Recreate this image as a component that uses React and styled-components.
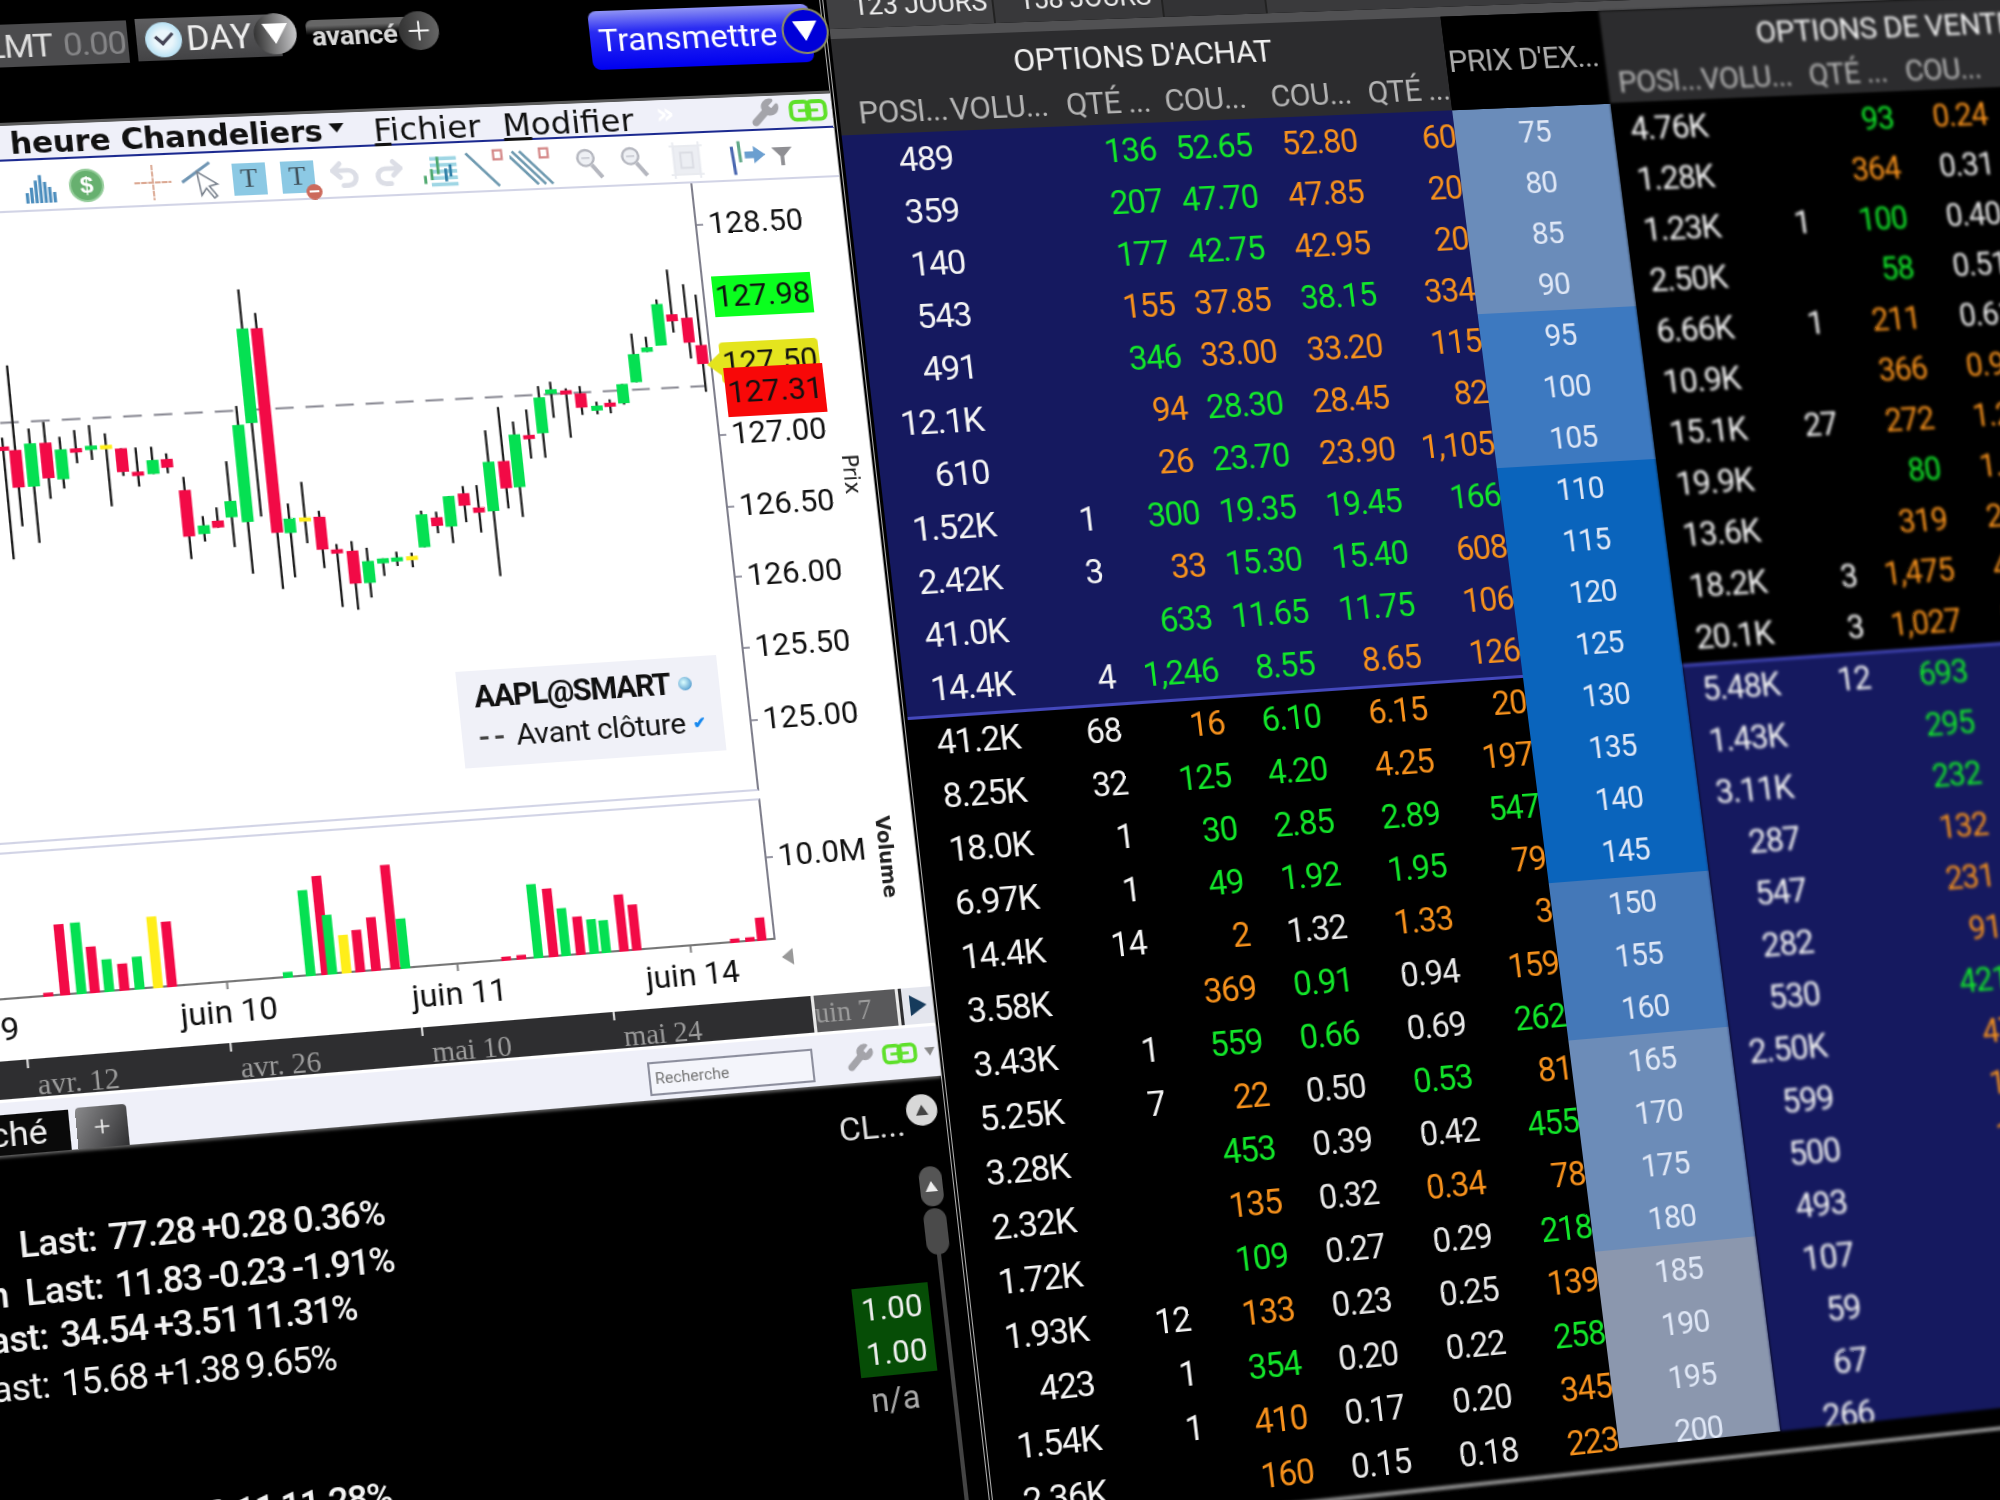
import React from "react";
import styled, { createGlobalStyle } from "styled-components";
import { Undo2, Redo2, Plus, Wrench } from "lucide-react";

// the whole terminal is a photo of a flat screen: lay it out flat, then project it
const FLAT = { x0: 1167, y0: 190, w: 775, h: 1300 };
const QUAD = [[953, 157], [1707, 125], [1874, 1411], [1107, 1492]];

const buildHomography = () => {
    const [[x0, y0], [x1, y1], [x2, y2], [x3, y3]] = QUAD;
    const dx1 = x1 - x2, dx2 = x3 - x2, dx3 = x0 - x1 + x2 - x3;
    const dy1 = y1 - y2, dy2 = y3 - y2, dy3 = y0 - y1 + y2 - y3;
    const den = dx1 * dy2 - dx2 * dy1;
    const g = (dx3 * dy2 - dx2 * dy3) / den;
    const h = (dx1 * dy3 - dx3 * dy1) / den;
    const a = x1 - x0 + g * x1, b = x3 - x0 + h * x3;
    const d = y1 - y0 + g * y1, e = y3 - y0 + h * y3;
    const sx = 1 / FLAT.w, sy = 1 / FLAT.h;
    return [
        a * sx, b * sy, x0 - a * sx * FLAT.x0 - b * sy * FLAT.y0,
        d * sx, e * sy, y0 - d * sx * FLAT.x0 - e * sy * FLAT.y0,
        g * sx, h * sy, 1 - g * sx * FLAT.x0 - h * sy * FLAT.y0,
    ];
};

const H = buildHomography();
const MATRIX = `matrix3d(${H[0]},${H[3]},0,${H[6]},${H[1]},${H[4]},0,${H[7]},0,0,1,0,${H[2]},${H[5]},0,${H[8]})`;

// picture position -> flat position, used for the chart data
const toFlat = (x, y) => {
    const [a, b, c, d, e, f, g, h, i] = H;
    const A = e * i - f * h, B = c * h - b * i, C = b * f - c * e;
    const D = f * g - d * i, E = a * i - c * g, F = c * d - a * f;
    const G = d * h - e * g, J = b * g - a * h, K = a * e - b * d;
    const w = G * x + J * y + K;
    return [(A * x + B * y + C) / w, (D * x + E * y + F) / w];
};

const RED = "#f20a46";
const YELLOW = "#ffee1a";
const candleColor = { g: "#05e052", r: RED, y: YELLOW };

// x, wick top, body top, body bottom, wick bottom, colour
const CANDLES = [
    [3, 533, 560, 570, 900, "r"], [17, 315, 570, 683, 800, "r"], [32, 505, 550, 680, 850, "g"],
    [47, 485, 548, 655, 717, "r"], [62, 530, 568, 658, 686, "g"], [76, 510, 565, 576, 610, "r"],
    [91, 495, 557, 568, 600, "g"], [106, 520, 555, 566, 740, "y"], [122, 565, 565, 636, 648, "r"],
    [138, 562, 635, 646, 680, "r"], [153, 560, 600, 642, 642, "g"], [167, 580, 597, 623, 640, "r"],
    [187, 650, 690, 830, 898, "r"], [204, 768, 796, 822, 845, "g"], [218, 742, 782, 803, 803, "r"],
    [231, 603, 723, 772, 862, "g"], [243, 437, 494, 787, 943, "g"], [247, 87, 205, 490, 772, "g"],
    [267, 157, 203, 820, 990, "r"], [290, 730, 775, 819, 953, "g"], [305, 665, 772, 782, 850, "y"],
    [321, 752, 770, 869, 925, "r"], [337, 852, 868, 878, 1042, "r"], [354, 843, 872, 971, 1050, "r"],
    [369, 863, 903, 969, 1013, "g"], [383, 895, 895, 910, 948, "g"], [397, 875, 892, 902, 918, "g"],
    [412, 878, 888, 898, 922, "y"], [423, 752, 763, 862, 862, "g"], [437, 755, 772, 798, 820, "r"],
    [450, 708, 708, 800, 850, "g"], [464, 678, 700, 737, 787, "r"], [479, 675, 742, 758, 818, "r"],
    [491, 510, 605, 754, 950, "g"], [505, 440, 603, 685, 746, "r"], [517, 484, 523, 682, 772, "g"],
    [529, 448, 525, 536, 596, "r"], [541, 378, 412, 520, 594, "g"], [551, 365, 388, 402, 474, "g"],
    [566, 385, 391, 400, 534, "r"], [581, 378, 400, 443, 465, "r"], [597, 425, 437, 452, 463, "g"],
    [610, 418, 428, 438, 460, "r"], [623, 372, 372, 430, 434, "g"], [635, 220, 282, 367, 367, "g"],
    [647, 230, 262, 276, 276, "g"], [659, 118, 132, 257, 257, "g"], [672, 28, 163, 184, 218, "r"],
    [688, 72, 173, 248, 296, "r"], [702, 103, 255, 312, 396, "r"],
];

const VOLUMES = [
    [90, 1170, "r"], [107, 965, "r"], [134, 960, "g"], [160, 1032, "r"], [186, 1070, "g"], [212, 1083, "r"],
    [236, 1062, "g"], [260, 942, "y"], [284, 957, "r"], [485, 1108, "g"], [509, 863, "g"], [532, 820, "r"],
    [549, 937, "g"], [576, 997, "y"], [598, 982, "r"], [622, 944, "r"], [645, 787, "r"], [671, 948, "g"],
    [845, 1062, "r"], [870, 1057, "r"], [886, 845, "g"], [912, 858, "r"], [936, 917, "g"], [962, 942, "r"],
    [985, 950, "g"], [1005, 953, "g"], [1030, 876, "r"], [1053, 906, "r"], [1222, 1008, "r"], [1247, 1004, "r"],
    [1263, 945, "r"],
];

const CALLS = [
    "489||136g|52.65g|52.80o|60o", "359||207g|47.70g|47.85o|20o", "140||177g|42.75g|42.95o|20o",
    "543||155o|37.85o|38.15g|334o", "491||346g|33.00o|33.20o|115o", "12.1K||94o|28.30g|28.45o|82o",
    "610||26o|23.70g|23.90o|1,105o", "1.52K|1|300g|19.35g|19.45g|166g", "2.42K|3|33o|15.30g|15.40g|608o",
    "41.0K||633g|11.65g|11.75g|106o", "14.4K|4|1,246g|8.55g|8.65o|126o", "41.2K|68|16o|6.10g|6.15o|20o",
    "8.25K|32|125g|4.20g|4.25o|197o", "18.0K|1|30g|2.85g|2.89g|547g", "6.97K|1|49g|1.92g|1.95g|79o",
    "14.4K|14|2o|1.32w|1.33o|3o", "3.58K||369o|0.91g|0.94w|159o", "3.43K|1|559g|0.66g|0.69w|262g",
    "5.25K|7|22o|0.50w|0.53g|81o", "3.28K||453g|0.39w|0.42w|455g", "2.32K||135o|0.32w|0.34o|78o",
    "1.72K||109g|0.27w|0.29w|218g", "1.93K|12|133o|0.23w|0.25w|139o", "423|1|354g|0.20w|0.22w|258g",
    "1.54K|1|410o|0.17w|0.20w|345o", "2.36K||160o|0.15w|0.18w|223o",
];

const PUTS = [
    "4.76K||93g|0.24o", "1.28K||364o|0.31w", "1.23K|1|100g|0.40w", "2.50K||58g|0.51w", "6.66K|1|211o|0.61w",
    "10.9K||366o|0.95o", "15.1K|27|272o|1.25o", "19.9K||80g|1.58o", "13.6K||319o|2.02o", "18.2K|3|1,475o|4.15o",
    "20.1K|3|1,027o|5.40o", "5.48K|12|693g|6.95o", "1.43K||295g|8.90o", "3.11K||232g|11.2o", "287||132o|14.0o",
    "547||231o|16.8o", "282||91o|19.9o", "530||421g|23.4o", "2.50K||47o|27.1o", "599||14o|31.0o", "500||14o|35.5o",
    "493||1o|40.0o", "107||", "59||", "67||", "266||",
];

const STRIKE_BG = ["#6a8cba", "#6a8cba", "#6a8cba", "#6a8cba", "#3d79c0", "#3d79c0", "#3d79c0",
    "#0a64bc", "#0a64bc", "#0a64bc", "#0a64bc", "#0a64bc", "#0a64bc", "#0a64bc", "#0a64bc",
    "#4478b8", "#4478b8", "#4478b8", "#6c8cb8", "#6c8cb8", "#6c8cb8", "#6c8cb8",
    "#8b97ae", "#8b97ae", "#8b97ae", "#8b97ae"];

const textColor = { g: "#12e62a", o: "#f6911c", w: "#e8e8e8" };

const GlobalStyle = createGlobalStyle`
    html, body { margin: 0; background: #000; overflow: hidden; }
    * { box-sizing: border-box; }
`;

const Photo = styled.div`
    width: 2000px;
    height: 1500px;
    overflow: hidden;
    background: #000;
    font-family: Roboto, "Liberation Sans", sans-serif;
`;

const Stage = styled.div`
    width: 2500px;
    height: 1700px;
    display: flex;
    transform-origin: 0 0;
`;

const LeftColumn = styled.div`
    width: 1053px;
    flex: none;
    display: flex;
    flex-direction: column;
`;

const Gutter = styled.div`
    width: 7px;
    flex: none;
    border-left: 4px double #b0b0b0;
`;

/* order ticket */
const Ticket = styled.div`
    height: 122px;
    flex: none;
    display: flex;
    padding-left: 250px;
    filter: blur(0.7px);
    border-bottom: 3px solid #5a5a5a;
`;

const PriceBox = styled.div`
    width: 143px;
    height: 41px;
    margin-top: 25px;
    background: #4b4b4d;
    display: flex;
    align-items: center;
    gap: 10px;
    padding-left: 13px;
    font-size: 32px;
    color: #ddd;
    letter-spacing: -1.2px;
    span { color: #858587; }
`;

const TifBox = styled.div`
    width: 134px;
    height: 41px;
    margin: 24px 0 0 8px;
    background: linear-gradient(#5e5e60, #434345);
    display: flex;
    align-items: center;
    gap: 4px;
    padding-left: 8px;
    position: relative;
    font-size: 33px;
    color: #eee;
`;

const Clock = styled.div`
    width: 34px;
    height: 34px;
    flex: none;
    border-radius: 50%;
    background: radial-gradient(circle, #eaf6fb 35%, #8fd0ee);
    position: relative;
    &::after {
        content: "";
        position: absolute;
        left: 10px;
        top: 8px;
        width: 12px;
        height: 8px;
        border-left: 3px solid #445;
        border-bottom: 3px solid #445;
        transform: rotate(-45deg);
    }
`;

const RoundButton = styled.div`
    position: absolute;
    right: ${(p) => p.$right || -12}px;
    top: ${(p) => p.$top || -3}px;
    width: ${(p) => p.$size || 44}px;
    height: ${(p) => p.$size || 44}px;
    border-radius: 50%;
    background: ${(p) => p.$bg || "linear-gradient(90deg, #333, #c8c8ca)"};
    display: flex;
    align-items: center;
    justify-content: center;
    color: #f4f4f4;
    ${(p) => p.$ring && "border: 2px solid #8f8f60;"}
`;

const DownTriangle = styled.div`
    width: 0;
    height: 0;
    border-left: 12px solid transparent;
    border-right: 12px solid transparent;
    border-top: ${(p) => p.$h || 20}px solid #fff;
`;

const AdvancedBox = styled.div`
    width: 103px;
    height: 32px;
    margin: 31px 0 0 24px;
    background: linear-gradient(#666 0 18%, #000 45%);
    border-radius: 6px 0 0 6px;
    font-size: 26px;
    font-weight: 700;
    color: #d8d8d8;
    padding: 1px 0 0 5px;
    position: relative;
    letter-spacing: -0.4px;
`;

const SendButton = styled.div`
    margin: 32px 0 0 165px;
    width: 215px;
    height: 58px;
    border-radius: 8px;
    background: linear-gradient(#8f93f4 0%, #2a2cf2 35%, #0000f0 100%);
    color: #fff;
    font-size: 32px;
    display: flex;
    align-items: center;
    padding-left: 8px;
    position: relative;
`;

/* chart */
const ChartPanel = styled.div`
    background: #fff;
    display: flex;
    flex-direction: column;
    flex: none;
`;

const TitleBar = styled.div`
    height: 34px;
    background: #eff0f9;
    border-bottom: 2px solid #1c2a90;
    display: flex;
    align-items: center;
    padding: 3px 0 0 276px;
    font-family: "DejaVu Sans", sans-serif;
    color: #111;
    position: relative;
`;

const ChartName = styled.b`
    font-size: 28.5px;
    letter-spacing: -0.3px;
    white-space: nowrap;
`;

const Caret = styled.span`
    width: 0;
    height: 0;
    flex: none;
    margin: 0 27px 6px 7px;
    border-left: 7px solid transparent;
    border-right: 7px solid transparent;
    border-top: 9px solid #111;
`;

const MenuItem = styled.span`
    margin-right: 21px;
    font-size: 31px;
    line-height: 34px;
`;

const TitleIcons = styled.div`
    position: absolute;
    right: ${(p) => p.$right || 4}px;
    top: 0;
    height: 100%;
    display: flex;
    align-items: center;
    gap: ${(p) => p.$gap || 8}px;
`;

const Chevrons = styled.span`
    position: absolute;
    left: 882px;
    top: -3px;
    color: #fff;
    font-size: 28px;
    font-weight: 700;
`;

const Toolbar = styled.div`
    height: 49px;
    display: flex;
    align-items: center;
    padding: 5px 0 0 280px;
    border-bottom: 2px solid #d2d4e6;
`;

const Tool = styled.div`
    flex: none;
    width: 40px;
    height: 40px;
    margin-right: ${(p) => p.$after || 0}px;
    display: flex;
    align-items: center;
    justify-content: center;
    position: relative;
`;

const Dollar = styled.div`
    width: 32px;
    height: 32px;
    border-radius: 50%;
    background: #67b06f;
    border: 2px solid #93cc99;
    color: #fff;
    font: 700 22px "Liberation Sans", sans-serif;
    text-align: center;
    line-height: 28px;
`;

const TextTool = styled.div`
    width: 31px;
    height: 31px;
    background: #8cc9e4;
    color: #40525c;
    font: 400 26px/30px "Liberation Serif", serif;
    text-align: center;
`;

const MinusBadge = styled.div`
    position: absolute;
    right: -2px;
    bottom: -3px;
    width: 15px;
    height: 15px;
    border-radius: 50%;
    background: #cc6a5c;
    &::after {
        content: "";
        position: absolute;
        left: 3px;
        top: 6px;
        width: 9px;
        height: 2px;
        background: #fff;
    }
`;

const PriceRow = styled.div`
    height: 592px;
    display: flex;
`;

const Plot = styled.div`
    width: 910px;
    flex: none;
    position: relative;
    border-right: 2px solid #7f7f8c;
    border-bottom: 2px solid #d2d4e6;
`;

const ChartSvg = styled.svg`
    position: absolute;
    left: 0;
    top: 0;
    overflow: visible;
`;

const Axis = styled.div`
    flex: 1;
    position: relative;
    font-size: 30px;
    color: #111;
`;

const AxisLabel = styled.div`
    position: absolute;
    left: 11px;
    top: ${(p) => p.$top}px;
    transform: translateY(-50%);
    line-height: 1;
    &::before {
        content: "";
        position: absolute;
        left: -11px;
        top: 50%;
        width: 6px;
        height: 2px;
        background: #9a9aa6;
    }
`;

const PriceTag = styled.div`
    position: absolute;
    left: ${(p) => p.$left}px;
    top: ${(p) => p.$top}px;
    width: 96px;
    height: ${(p) => p.$h || 40}px;
    transform: translateY(-50%);
    background: ${(p) => p.$bg};
    text-align: center;
    line-height: ${(p) => p.$h || 40}px;
    color: #111;
    ${(p) => p.$pointer && `
        border-radius: 4px;
        &::before {
            content: "";
            position: absolute;
            left: -13px;
            top: 10px;
            border-top: 11px solid transparent;
            border-bottom: 11px solid transparent;
            border-right: 13px solid ${p.$bg};
        }
    `}
`;

const VerticalLabel = styled.div`
    position: absolute;
    left: ${(p) => p.$left}px;
    top: ${(p) => p.$top}px;
    writing-mode: vertical-rl;
    transform: translateY(-50%);
    font: ${(p) => p.$weight || 400} ${(p) => p.$size || 21}px "DejaVu Sans", sans-serif;
    color: #222;
`;

const Legend = styled.div`
    position: absolute;
    left: 636px;
    top: 459px;
    width: 247px;
    height: 92px;
    background: #f0f1f8;
    padding: 8px 0 0 15px;
    color: #111;
`;

const LegendName = styled.div`
    font-size: 29px;
    font-weight: 700;
    letter-spacing: -1.3px;
    display: flex;
    align-items: center;
    gap: 8px;
    line-height: 34px;
`;

const LegendLine = styled.div`
    font-size: 28.5px;
    letter-spacing: -0.5px;
    display: flex;
    align-items: center;
    gap: 7px;
    margin-top: 6px;
    line-height: 32px;
    white-space: pre;
`;

const LegendDash = styled.span`
    font-weight: 700;
    letter-spacing: 3px;
    color: #444;
`;

const Globe = styled.span`
    width: 13px;
    height: 13px;
    border-radius: 50%;
    background: radial-gradient(circle at 40% 40%, #dff, #2c7fc0);
`;

const Check = styled.span`
    color: #1688ee;
    font-size: 15px;
    font-weight: 700;
`;

const VolumeRow = styled.div`
    height: 136px;
    margin-top: 7px;
    display: flex;
`;

const VolumePlot = styled.div`
    width: 910px;
    flex: none;
    position: relative;
    border-top: 2px solid #d2d4e6;
    border-right: 2px solid #7f7f8c;
    border-bottom: 2px solid #777;
`;

const TimeAxis = styled.div`
    height: 56px;
    position: relative;
    font-size: 30px;
    color: #111;
`;

const TimeLabel = styled.span`
    position: absolute;
    left: ${(p) => p.$x}px;
    top: 9px;
    transform: translateX(-50%);
    white-space: nowrap;
    &::before {
        content: "";
        position: absolute;
        left: 50%;
        top: -9px;
        width: 2px;
        height: 6px;
        background: #888;
    }
`;

const BackArrow = styled.div`
    position: absolute;
    left: 914px;
    top: 9px;
    width: 0;
    height: 0;
    border-top: 8px solid transparent;
    border-bottom: 8px solid transparent;
    border-right: 11px solid #999;
`;

const Overview = styled.div`
    height: 35px;
    background: #2e2e30;
    position: relative;
    font: 400 27px/35px "Liberation Serif", serif;
    color: #9c9c9c;
`;

const OverviewLabel = styled.span`
    position: absolute;
    left: ${(p) => p.$x}px;
    top: 7px;
    transform: translateX(-50%);
    white-space: nowrap;
    &::before {
        content: "";
        position: absolute;
        left: -8px;
        top: -7px;
        width: 2px;
        height: 8px;
        background: #ddd;
    }
`;

const OverviewHandle = styled.div`
    position: absolute;
    left: 937px;
    top: 0;
    width: 84px;
    height: 35px;
    background: #59595b;
    border-left: 3px solid #e8e8e8;
    border-right: 3px solid #e8e8e8;
    overflow: hidden;
    white-space: nowrap;
    text-indent: -8px;
`;

const OverviewArrow = styled.div`
    position: absolute;
    left: 1024px;
    top: 0;
    width: 29px;
    height: 35px;
    background: #e4e6ee;
    &::after {
        content: "";
        position: absolute;
        left: 7px;
        top: 7px;
        border-top: 10px solid transparent;
        border-bottom: 10px solid transparent;
        border-left: 16px solid #163b5c;
    }
`;

const SearchBand = styled.div`
    height: 51px;
    background: #eff0f9;
    border-top: 3px solid #fff;
    display: flex;
    align-items: flex-end;
    position: relative;
    box-shadow: 0 2px 3px rgba(255, 255, 255, 0.4);
`;

const PageTab = styled.div`
    width: 244px;
    height: 37px;
    background: #0a0a0a;
    color: #eee;
    font-size: 32px;
    text-align: right;
    padding-right: 20px;
    line-height: 37px;
`;

const AddTab = styled.div`
    width: 46px;
    height: 38px;
    margin-left: 6px;
    border-radius: 4px 4px 0 0;
    background: linear-gradient(120deg, #8a8a8c, #303032);
    color: #eee;
    display: flex;
    align-items: center;
    justify-content: center;
`;

const SearchBox = styled.div`
    position: absolute;
    left: 776px;
    top: 12px;
    width: 157px;
    height: 32px;
    border: 2px solid #8d8f9e;
    background: #f4f5fb;
    font-size: 15px;
    color: #777;
    padding: 5px 0 0 4px;
`;

const SmallCaret = styled.span`
    width: 0;
    height: 0;
    border-left: 5px solid transparent;
    border-right: 5px solid transparent;
    border-top: 8px solid #888;
`;

/* scanner */
const Scanner = styled.div`
    flex: 1;
    display: flex;
    color: #f2f2f2;
    filter: blur(0.4px);
`;

const ScanList = styled.div`
    width: 930px;
    flex: none;
    padding-top: 63px;
    font-size: 33px;
`;

const ScanRow = styled.div`
    height: ${(p) => p.$h || 44}px;
    line-height: 40px;
    padding-left: ${(p) => p.$pad}px;
    margin-top: ${(p) => p.$top || 0}px;
    font-weight: ${(p) => (p.$light ? 400 : 500)};
    letter-spacing: -0.6px;
    white-space: nowrap;
    b { font-weight: inherit; margin-left: 3px; letter-spacing: -1.3px; word-spacing: -1px; }
`;

const RowPrefix = styled.span`
    margin-right: 15px;
`;

const ScanSide = styled.div`
    flex: 1;
    position: relative;
`;

const ColumnTitle = styled.div`
    position: absolute;
    left: 20px;
    top: 24px;
    font-size: 32px;
    color: #ddd;
`;

const RoundIcon = styled.div`
    position: absolute;
    left: ${(p) => p.$left}px;
    top: ${(p) => p.$top}px;
    width: ${(p) => p.$w}px;
    height: ${(p) => p.$h}px;
    border-radius: 15px;
    background: ${(p) => p.$bg};
    display: flex;
    align-items: center;
    justify-content: center;
`;

const TinyUp = styled.div`
    width: 0;
    height: 0;
    border-left: 6px solid transparent;
    border-right: 6px solid transparent;
    border-bottom: 10px solid ${(p) => p.$c || "#eee"};
`;

const ScrollTrack = styled.div`
    position: absolute;
    left: 100px;
    top: 130px;
    bottom: 0;
    width: 4px;
    background: #444;
`;

const GreenBox = styled.div`
    position: absolute;
    left: 15px;
    top: 194px;
    width: 73px;
    height: 84px;
    background: #064d06;
    font-size: 30px;
    line-height: 42px;
    text-align: center;
    color: #f0f0f0;
`;

const NotAvailable = styled.div`
    position: absolute;
    left: 22px;
    top: 282px;
    font-size: 31px;
    color: #aaa;
`;

/* options table */
const OptionsPanel = styled.div`
    flex: none;
    width: 1430px;
`;

const TabRow = styled.div`
    height: 58px;
    display: flex;
    font-size: 27px;
    color: #eee;
    letter-spacing: -0.3px;
    filter: blur(0.4px);
    background: #3a3a3c;
`;

const ExpiryTab = styled.div`
    width: ${(p) => p.$w}px;
    background: ${(p) => p.$bg};
    border-right: 2px solid #222;
    padding: 20px 0 0 25px;
    white-space: nowrap;
`;

const FilterField = styled.div`
    flex: 1;
    background: #000;
    height: 34px;
    color: #bbb;
    padding: 0 0 0 20px;
    filter: blur(1px);
`;

const GreyStrip = styled.div`
    height: 10px;
    background: #515153;
`;

const HeadRow = styled.div`
    display: flex;
    height: 96px;
`;

const HeadBlock = styled.div`
    width: ${(p) => p.$w}px;
    flex: none;
    background: #2c2c2e;
    ${(p) => p.$blur && `filter: blur(${p.$blur}px);`}
`;

const SideTitle = styled.div`
    height: 53px;
    line-height: 56px;
    font-size: 32px;
    color: #f0f0f0;
    text-align: center;
    letter-spacing: -0.5px;
    padding-right: ${(p) => p.$pr || 0}px;
`;

const StrikeHead = styled.div`
    width: 166px;
    flex: none;
    background: #000;
    color: #aaa;
    font-size: 32px;
    line-height: 92px;
    text-align: center;
    white-space: nowrap;
    letter-spacing: -0.8px;
    padding-right: 4px;
    filter: blur(0.6px);
`;

const Columns = styled.div`
    display: grid;
    grid-template-columns: ${(p) => p.$cols};
    height: ${(p) => p.$h || 52}px;
    align-items: center;
    font-size: ${(p) => p.$size || 33}px;
    letter-spacing: ${(p) => p.$track || -1.2}px;
`;

const HeadCell = styled.div`
    text-align: right;
    color: #b4b4b4;
    white-space: nowrap;
`;

const BodyRow = styled.div`
    display: flex;
    height: 1352px;
`;

const SideBody = styled.div`
    width: ${(p) => p.$w}px;
    flex: none;
    ${(p) => p.$blur && `filter: blur(${p.$blur}px);`}
`;

const QuoteRow = styled(Columns)`
    background: ${(p) => (p.$navy ? "#15195f" : "#000")};
    ${(p) => p.$rule && "box-shadow: inset 0 3px 0 #4448bc;"}
    & > :first-child { font-size: 34px; }
`;

const Cell = styled.div`
    text-align: right;
    white-space: nowrap;
    color: ${(p) => textColor[p.$c] || "#f4f4f4"};
`;

const StrikeColumn = styled.div`
    width: 166px;
    flex: none;
    height: 1336px;
    overflow: hidden;
`;

const StrikeCell = styled.div`
    height: 52px;
    background: ${(p) => p.$bg};
    color: #dfe7f6;
    font-size: 31px;
    line-height: 52px;
    text-align: center;
    letter-spacing: -1px;
`;

const StrikeText = styled.span`
    display: block;
    filter: blur(0.7px);
`;

const PutBody = styled(SideBody)`
    height: 1336px;
    overflow: hidden;
`;

const BezelLine = styled.div`
    height: 4px;
    margin-top: 2px;
    background: #8f8f8f;
    filter: blur(1.5px);
`;

const CALL_COLS = "107px 100px 103px 97px 108px 102px";
const PUT_COLS = "99px 96px 104px 102px 110px 110px";

const splitValue = (value) => {
    const last = value.slice(-1);
    return "gow".includes(last) ? [value.slice(0, -1), last] : [value, null];
};

const QuoteLine = ({ line, cols, navy, rule }) => (
    <QuoteRow $cols={cols} $navy={navy} $rule={rule}>
        {line.split("|").map((value, index) => {
            const [text, color] = splitValue(value);
            return <Cell key={index} $c={color}>{text}</Cell>;
        })}
    </QuoteRow>
);

const HeadColumns = ({ cols }) => (
    <Columns $cols={cols} $h={43} $size={31} $track={-0.6}>
        <HeadCell>POSI...</HeadCell><HeadCell>VOLU...</HeadCell><HeadCell>QTÉ ...</HeadCell>
        <HeadCell>COU...</HeadCell><HeadCell>COU...</HeadCell><HeadCell>QTÉ ...</HeadCell>
    </Columns>
);

const ChainIcon = ({ size = 38 }) => (
    <svg width={size} height={size * 0.62} viewBox="0 0 38 24" fill="none">
        <rect x="2" y="3" width="18" height="18" rx="5" stroke="#5ee02a" strokeWidth="4" />
        <rect x="18" y="3" width="18" height="18" rx="5" stroke="#5ee02a" strokeWidth="4" />
        <path d="M9 12h20" stroke="#5ee02a" strokeWidth="3" />
    </svg>
);

const WrenchIcon = ({ size = 30 }) => (
    <Wrench size={size} color="#a4a4aa" fill="#a4a4aa" strokeWidth={1.5} />
);

const HistIcon = () => (
    <svg width="34" height="30" viewBox="0 0 40 36">
        {[12, 18, 26, 32, 24, 18, 12].map((h, i) => (
            <rect key={i} x={3 + i * 5} y={36 - h} width="3.5" height={h} fill="#4b8dbd" />
        ))}
    </svg>
);

const CrossIcon = () => (
    <svg width="36" height="36" viewBox="0 0 40 40">
        <path d="M20 1v38M1 20h38" stroke="#dba892" strokeWidth="2" strokeDasharray="6 1" />
    </svg>
);

const PointerIcon = () => (
    <svg width="40" height="40" viewBox="0 0 42 42">
        <path d="M2 22L30 3" stroke="#6f95b3" strokeWidth="3" />
        <path d="M17 12l3 24 5-7 7 10 3-2-7-10 8-2z" fill="#fff" stroke="#7d8590" strokeWidth="1.6" />
    </svg>
);

const MiniChartIcon = () => (
    <svg width="36" height="36" viewBox="0 0 40 40">
        {[5, 12, 19, 26, 33].map((y) => <rect key={y} x="10" y={y} width="28" height="4" fill="#9fd6e4" />)}
        <path d="M4 34v-9M11 30V18M18 24V5" stroke="#4ea86e" strokeWidth="3" />
        <path d="M26 18v14M31 14v13" stroke="#2f7fa8" strokeWidth="3" />
    </svg>
);

const LineIcon = ({ count = 1 }) => (
    <svg width="46" height="42" viewBox="0 0 46 42">
        {Array.from({ length: count }).map((_, i) => (
            <path key={i} d={`M${3 + (i - (count - 1) / 2) * 8} 3L${37 + (i - (count - 1) / 2) * 8} 41`} stroke="#6f9ab0" strokeWidth="3" />
        ))}
        <rect x="33" y="1" width="9" height="10" fill="#fff" stroke="#d58a8a" strokeWidth="2.5" />
    </svg>
);

const ZoomIcon = () => (
    <svg width="28" height="34" viewBox="0 0 36 42" fill="none">
        <circle cx="13" cy="13" r="10" stroke="#b5b7bf" strokeWidth="3" fill="#eef0f4" />
        <path d="M20 22l12 16" stroke="#b5b7bf" strokeWidth="5" />
        <path d="M8 13h10" stroke="#c5c7cf" strokeWidth="2" />
    </svg>
);

const FitIcon = () => (
    <svg width="34" height="38" viewBox="0 0 36 40" fill="none">
        <rect x="5" y="5" width="26" height="30" fill="#eceef3" stroke="#e6e8ee" strokeWidth="2" />
        <path d="M1 5h34M1 35h34M5 1v38M31 1v38" stroke="#e9ebf0" strokeWidth="2" />
        <rect x="12" y="12" width="12" height="16" stroke="#dbdde4" strokeWidth="2" />
    </svg>
);

const ShiftIcon = () => (
    <svg width="42" height="40" viewBox="0 0 46 42" fill="none">
        <path d="M5 8l2 32" stroke="#4a67b0" strokeWidth="3.5" />
        <path d="M13 2l1 24" stroke="#62a98a" strokeWidth="3.5" />
        <path d="M19 14h10V8l13 10-13 10v-6H19z" fill="#6b9fd0" />
    </svg>
);

const FunnelIcon = () => (
    <svg width="22" height="20" viewBox="0 0 24 22">
        <path d="M1 1h22L14 11v10h-4V11z" fill="#8f8f93" />
    </svg>
);

const Candles = () => {
    const [x1, y1] = toFlat(0, 423);
    const [x2, y2] = toFlat(705, 386);
    const py = (y) => 260 + y / 3;
    return (
        <ChartSvg width="910" height="592" viewBox="0 205 910 592">
            <line x1={x1} y1={y1} x2={x2} y2={y2} stroke="#8a8a94" strokeWidth="2" strokeDasharray="17 11" />
            {CANDLES.map(([x, top, bodyTop, bodyBottom, bottom, color], index) => {
                const [cx, vMid] = toFlat(x, py((bodyTop + bodyBottom) / 2));
                const [, vTop] = toFlat(x, py(top));
                const [, vBodyTop] = toFlat(x, py(bodyTop));
                const [, vBodyBottom] = toFlat(x, py(bodyBottom));
                const [, vBottom] = toFlat(x, py(bottom));
                return (
                    <g key={index}>
                        <line x1={cx} y1={vTop} x2={cx} y2={vBottom} stroke="#222" strokeWidth="2.2" />
                        <rect x={cx - 5.5} y={Math.min(vBodyTop, vMid)} width="11" height={Math.max(vBodyBottom - vBodyTop, 4)} fill={candleColor[color]} />
                    </g>
                );
            })}
        </ChartSvg>
    );
};

const Volumes = () => (
    <ChartSvg width="910" height="136" viewBox="0 804 910 136">
        {VOLUMES.map(([cx, cy, color], index) => {
            const [u, v] = toFlat(cx / 1.65, 600 + cy / 3);
            return <rect key={index} x={u - 10.5} y={v} width="9" height={938 - v} fill={candleColor[color]} />;
        })}
    </ChartSvg>
);

const App = () => (
    <Photo>
        <GlobalStyle />
        <Stage style={{ transform: MATRIX }}>
            <LeftColumn>
                <Ticket>
                    <PriceBox>LMT <span>0.00</span></PriceBox>
                    <TifBox>
                        <Clock />
                        DAY
                        <RoundButton $size={40} $right={-15} $top={-1}><DownTriangle /></RoundButton>
                    </TifBox>
                    <AdvancedBox>
                        avancé
                        <RoundButton $top={-5} $right={-22} $size={38} $bg="linear-gradient(90deg, #333, #666)"><Plus size={30} strokeWidth={1.5} /></RoundButton>
                    </AdvancedBox>
                    <SendButton>
                        Transmettre
                        <RoundButton $top={4} $right={-17} $size={46} $bg="#0000d8" $ring><DownTriangle /></RoundButton>
                    </SendButton>
                </Ticket>
                <ChartPanel>
                    <TitleBar>
                        <ChartName>heure Chandeliers</ChartName>
                        <Caret />
                        <MenuItem><u>F</u>ichier</MenuItem>
                        <MenuItem><u>M</u>odifier</MenuItem>
                        <Chevrons>»</Chevrons>
                        <TitleIcons><WrenchIcon /><ChainIcon /></TitleIcons>
                    </TitleBar>
                    <Toolbar>
                        <Tool $after={2}><HistIcon /></Tool>
                        <Tool $after={21}><Dollar>$</Dollar></Tool>
                        <Tool $after={5}><CrossIcon /></Tool>
                        <Tool $after={4}><PointerIcon /></Tool>
                        <Tool $after={5}><TextTool>T</TextTool></Tool>
                        <Tool $after={4}><TextTool>T</TextTool><MinusBadge /></Tool>
                        <Tool $after={2}><Undo2 size={32} color="#dcdee6" strokeWidth={3.5} /></Tool>
                        <Tool $after={8}><Redo2 size={32} color="#dcdee6" strokeWidth={3.5} /></Tool>
                        <Tool $after={3}><MiniChartIcon /></Tool>
                        <Tool $after={4}><LineIcon /></Tool>
                        <Tool $after={16}><LineIcon count={3} /></Tool>
                        <Tool $after={3}><ZoomIcon /></Tool>
                        <Tool $after={10}><ZoomIcon /></Tool>
                        <Tool $after={20}><FitIcon /></Tool>
                        <Tool $after={-7}><ShiftIcon /></Tool>
                        <Tool><FunnelIcon /></Tool>
                    </Toolbar>
                    <PriceRow>
                        <Plot>
                            <Candles />
                            <Legend>
                                <LegendName>AAPL@SMART <Globe /></LegendName>
                                <LegendLine><LegendDash>--</LegendDash>Avant clôture<Check>✔</Check></LegendLine>
                            </Legend>
                        </Plot>
                        <Axis>
                            <AxisLabel $top={40}>128.50</AxisLabel>
                            <AxisLabel $top={246}>127.00</AxisLabel>
                            <AxisLabel $top={316}>126.50</AxisLabel>
                            <AxisLabel $top={384}>126.00</AxisLabel>
                            <AxisLabel $top={453}>125.50</AxisLabel>
                            <AxisLabel $top={523}>125.00</AxisLabel>
                            <PriceTag $left={8} $top={112} $bg="#0aff1e">127.98</PriceTag>
                            <PriceTag $left={8} $top={177} $bg="#e4e41e" $pointer>127.50</PriceTag>
                            <PriceTag $left={10} $top={206} $h={48} $bg="#f80808">127.31</PriceTag>
                            <VerticalLabel $left={110} $top={292}>Prix</VerticalLabel>
                        </Axis>
                    </PriceRow>
                    <VolumeRow>
                        <VolumePlot><Volumes /></VolumePlot>
                        <Axis>
                            <AxisLabel $top={56}>10.0M</AxisLabel>
                            <VerticalLabel $left={104} $top={65} $weight={700} $size={19}>Volume</VerticalLabel>
                        </Axis>
                    </VolumeRow>
                    <TimeAxis>
                        <TimeLabel $x={172}>juin 9</TimeLabel>
                        <TimeLabel $x={397}>juin 10</TimeLabel>
                        <TimeLabel $x={609}>juin 11</TimeLabel>
                        <TimeLabel $x={828}>juin 14</TimeLabel>
                        <BackArrow />
                    </TimeAxis>
                    <Overview>
                        <OverviewLabel $x={256}>avr. 12</OverviewLabel>
                        <OverviewLabel $x={439}>avr. 26</OverviewLabel>
                        <OverviewLabel $x={615}>mai 10</OverviewLabel>
                        <OverviewLabel $x={794}>mai 24</OverviewLabel>
                        <OverviewHandle>juin 7</OverviewHandle>
                        <OverviewArrow />
                    </Overview>
                    <SearchBand>
                        <PageTab>Marché</PageTab>
                        <AddTab><Plus size={20} /></AddTab>
                        <SearchBox>Recherche</SearchBox>
                        <TitleIcons $right={3} $gap={7}><WrenchIcon size={28} /><ChainIcon size={34} /><SmallCaret /></TitleIcons>
                    </SearchBand>
                </ChartPanel>
                <Scanner>
                    <ScanList>
                        <ScanRow $pad={189}>Last: <b>77.28 +0.28 0.36%</b></ScanRow>
                        <ScanRow $pad={158} $h={41}><RowPrefix>n</RowPrefix>Last: <b>11.83 -0.23 -1.91%</b></ScanRow>
                        <ScanRow $pad={138}>Last: <b>34.54 +3.51 11.31%</b></ScanRow>
                        <ScanRow $pad={136} $light>Last: <b>15.68 +1.38 9.65%</b></ScanRow>
                        <ScanRow $pad={135} $top={87}>Last: <b>99.00 +10.11 11.28%</b></ScanRow>
                    </ScanList>
                    <ScanSide>
                        <ColumnTitle>CL...</ColumnTitle>
                        <RoundIcon $left={86} $top={16} $w={30} $h={30} $bg="#d8d8d8"><TinyUp $c="#444" /></RoundIcon>
                        <ScrollTrack />
                        <RoundIcon $left={91} $top={85} $w={22} $h={38} $bg="#555"><TinyUp /></RoundIcon>
                        <RoundIcon $left={91} $top={125} $w={22} $h={44} $bg="#4a4a4a" />
                        <GreenBox>1.00<br />1.00</GreenBox>
                        <NotAvailable>n/a</NotAvailable>
                    </ScanSide>
                </Scanner>
            </LeftColumn>
            <Gutter />
            <OptionsPanel>
                <TabRow>
                    <ExpiryTab $w={165} $bg="#404042">123 JOURS</ExpiryTab>
                    <ExpiryTab $w={170} $bg="#38383a">158 JOURS</ExpiryTab>
                    <ExpiryTab $w={105} $bg="#333335" />
                    <FilterField>Affichage ▾</FilterField>
                </TabRow>
                <GreyStrip />
                <HeadRow>
                    <HeadBlock $w={617}>
                        <SideTitle>OPTIONS D'ACHAT</SideTitle>
                        <HeadColumns cols={CALL_COLS} />
                    </HeadBlock>
                    <StrikeHead>PRIX D'EX...</StrikeHead>
                    <HeadBlock $w={647} $blur={1.6}>
                        <SideTitle $pr={41}>OPTIONS DE VENTE</SideTitle>
                        <HeadColumns cols={PUT_COLS} />
                    </HeadBlock>
                </HeadRow>
                <BodyRow>
                    <SideBody $w={617}>
                        {CALLS.map((line, index) => (
                            <QuoteLine key={index} line={line} cols={CALL_COLS} navy={index < 11} rule={index === 11} />
                        ))}
                    </SideBody>
                    <StrikeColumn>
                        {STRIKE_BG.map((bg, index) => (
                            <StrikeCell key={index} $bg={bg}><StrikeText>{75 + index * 5}</StrikeText></StrikeCell>
                        ))}
                    </StrikeColumn>
                    <PutBody $w={647} $blur={1.6}>
                        {PUTS.map((line, index) => (
                            <QuoteLine key={index} line={line} cols={PUT_COLS} navy={index >= 11} rule={index === 11} />
                        ))}
                    </PutBody>
                </BodyRow>
                <BezelLine />
            </OptionsPanel>
        </Stage>
    </Photo>
);

export default App;
